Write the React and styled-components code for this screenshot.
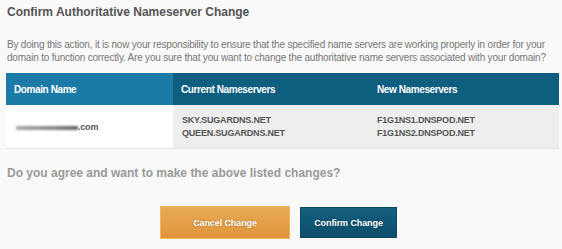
import React from 'react'
import styled, { createGlobalStyle } from 'styled-components'

const GlobalStyle = createGlobalStyle`
  html, body { margin: 0; padding: 0; background: #f9f9f9; }
  body { font-family: "Liberation Sans", Arial, sans-serif; }
`

const Page = styled.div`
  width: 562px;
  height: 249px;
  padding: 5px 3px 0 6px;
  box-sizing: border-box;
  background: #f9f9f9;
`

const Title = styled.h2`
  margin: 0 0 0 1px;
  font-size: 12px;
  font-weight: bold;
  color: #555;
  line-height: 14px;
`

const Intro = styled.p`
  margin: 19px 0 0 1px;
  font-size: 10px;
  line-height: 13px;
  color: #777;
  letter-spacing: -0.2px;
`

const Table = styled.div`
  margin-top: 9px;
  width: 553px;
  display: grid;
  grid-template-columns: 167px 196px 190px;
  border-bottom: 1px solid #e6e6e6;
`

const HeadCell = styled.div`
  height: 32px;
  display: flex;
  align-items: center;
  padding-left: ${({ $pad }) => $pad}px;
  background: ${({ $light }) => ($light ? '#1c7aa6' : '#0e5e80')};
  color: #fff;
  font-size: 10px;
  font-weight: bold;
  letter-spacing: -0.4px;
  box-sizing: border-box;
`

const BodyCell = styled.div`
  height: 43px;
  display: flex;
  flex-direction: column;
  justify-content: center;
  padding-left: ${({ $pad }) => $pad}px;
  background: ${({ $white }) => ($white ? '#fff' : '#eeeeee')};
  color: #555;
  font-size: 9px;
  font-weight: bold;
  letter-spacing: -0.2px;
  line-height: 13px;
  box-sizing: border-box;
`

const Domain = styled.div`
  display: flex;
  align-items: center;
  margin-top: 2px;
`

const Masked = styled.span`
  display: inline-block;
  width: 62px;
  height: 4px;
  margin-right: 0;
  background: linear-gradient(90deg, #aaa, #888 60%, #666);
  filter: blur(1px);
`

const Question = styled.h3`
  margin: 17px 0 0 1px;
  font-size: 12px;
  line-height: 14px;
  font-weight: bold;
  color: #999;
`

const Actions = styled.div`
  display: flex;
  align-items: center;
  gap: 10px;
  margin-top: 26px;
  padding-left: 154px;
`

const Button = styled.button`
  height: ${({ $variant }) => ($variant === 'cancel' ? 33 : 31)}px;
  width: ${({ $variant }) => ($variant === 'cancel' ? 130 : 97)}px;
  border: 1px solid ${({ $variant }) => ($variant === 'cancel' ? '#f0b462' : '#0a4a66')};
  background: ${({ $variant }) =>
    $variant === 'cancel'
      ? 'linear-gradient(#eaaa55, #df943b)'
      : 'linear-gradient(#145f80, #0c4d6b)'};
  color: #fff;
  font-family: "Liberation Sans", Arial, sans-serif;
  font-size: 9px;
  font-weight: bold;
  letter-spacing: -0.1px;
  text-shadow: 0 0 2px rgba(0, 0, 0, 0.35);
  padding: 0;
  cursor: pointer;
`

export default function App() {
  return (
    <>
      <GlobalStyle />
      <Page>
        <Title>Confirm Authoritative Nameserver Change</Title>
        <Intro>
          By doing this action, it is now your responsibility to ensure that the specified name servers are working properly in order for your
          domain to function correctly. Are you sure that you want to change the authoritative name servers associated with your domain?
        </Intro>
        <Table>
          <HeadCell $light $pad={8}>Domain Name</HeadCell>
          <HeadCell $pad={8}>Current Nameservers</HeadCell>
          <HeadCell $pad={8}>New Nameservers</HeadCell>
          <BodyCell $white $pad={10}>
            <Domain><Masked />.com</Domain>
          </BodyCell>
          <BodyCell $pad={9}>
            <span>SKY.SUGARDNS.NET</span>
            <span>QUEEN.SUGARDNS.NET</span>
          </BodyCell>
          <BodyCell $pad={8}>
            <span>F1G1NS1.DNSPOD.NET</span>
            <span>F1G1NS2.DNSPOD.NET</span>
          </BodyCell>
        </Table>
        <Question>Do you agree and want to make the above listed changes?</Question>
        <Actions>
          <Button $variant="cancel">Cancel Change</Button>
          <Button $variant="confirm">Confirm Change</Button>
        </Actions>
      </Page>
    </>
  )
}
